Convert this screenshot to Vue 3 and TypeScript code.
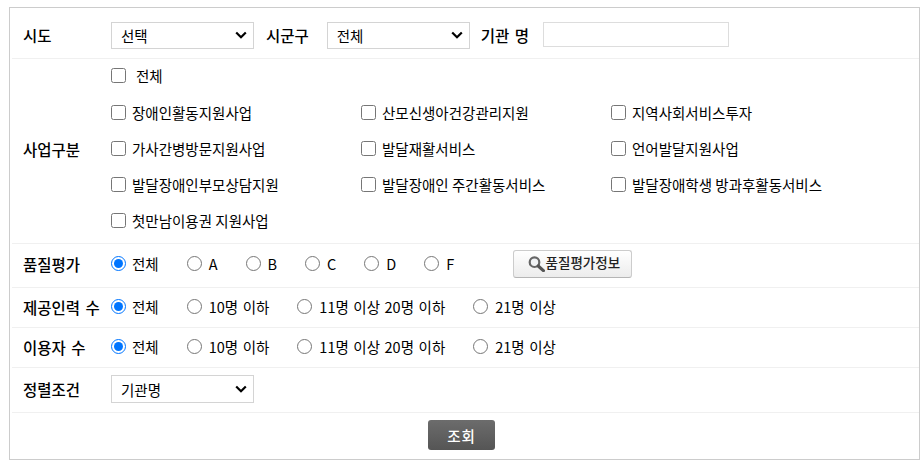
<script setup lang="ts">
const bizRows: string[][] = [
  ['장애인활동지원사업', '산모신생아건강관리지원', '지역사회서비스투자'],
  ['가사간병방문지원사업', '발달재활서비스', '언어발달지원사업'],
  ['발달장애인부모상담지원', '발달장애인 주간활동서비스', '발달장애학생 방과후활동서비스'],
  ['첫만남이용권 지원사업'],
]
const grades = ['전체', 'A', 'B', 'C', 'D', 'F']
const counts = ['전체', '10명 이하', '11명 이상 20명 이하', '21명 이상']
</script>

<template>
  <form class="panel" @submit.prevent>
    <div class="row row-top">
      <span class="label">시도</span>
      <select class="sel"><option>선택</option></select>
      <span class="label inline l-sgg">시군구</span>
      <select class="sel"><option>전체</option></select>
      <span class="label inline l-org">기관 명</span>
      <input class="txt" type="text" />
    </div>

    <div class="row row-biz">
      <span class="label">사업구분</span>
      <div class="biz">
        <label class="chk first"><input type="checkbox" /><span>전체</span></label>
        <div v-for="(r, i) in bizRows" :key="i" class="biz-row">
          <label v-for="t in r" :key="t" class="chk"><input type="checkbox" /><span>{{ t }}</span></label>
        </div>
      </div>
    </div>

    <div class="row row-grade">
      <span class="label">품질평가</span>
      <label v-for="(g, i) in grades" :key="g" class="rad">
        <input type="radio" name="grade" :checked="i === 0" /><span>{{ g }}</span>
      </label>
      <button type="button" class="info">
        <svg class="info-icon" width="18" height="16" viewBox="0 0 18 16">
          <circle cx="6.5" cy="6.2" r="4.8" fill="#f1f3f5" stroke="#666" stroke-width="2.2" />
          <path d="M10.2 10 L15.4 14.6" stroke="#555" stroke-width="3.2" stroke-linecap="round" />
        </svg>
        <span class="info-text">품질평가정보</span>
      </button>
    </div>

    <div class="row row-count">
      <span class="label">제공인력 수</span>
      <label v-for="(c, i) in counts" :key="c" class="rad">
        <input type="radio" name="staff" :checked="i === 0" /><span>{{ c }}</span>
      </label>
    </div>

    <div class="row row-count">
      <span class="label">이용자 수</span>
      <label v-for="(c, i) in counts" :key="c" class="rad">
        <input type="radio" name="user" :checked="i === 0" /><span>{{ c }}</span>
      </label>
    </div>

    <div class="row row-sort">
      <span class="label">정렬조건</span>
      <select class="sel sel-tall"><option>기관명</option></select>
    </div>

    <div class="actions">
      <button type="submit" class="search">조회</button>
    </div>
  </form>
</template>

<style>
html, body { margin: 0; background: #fff; }
</style>

<style scoped>
.panel {
  box-sizing: border-box;
  width: 911px;
  height: 453px;
  margin: 7px 0 0 9px;
  padding-left: 2px;
  border: 1px solid #ccc;
  font-family: "Noto Sans CJK KR", "Noto Sans", sans-serif;
  font-size: 14.5px;
  color: #000;
}
.row {
  box-sizing: border-box;
  display: flex;
  align-items: center;
  padding-left: 11px;
  border-bottom: 1px solid #f0f0f0;
}
.row-top { height: 51px; padding-top: 4px; }
.row-biz { height: 185px; padding-bottom: 4px; }
.row-grade { height: 44px; padding-bottom: 4px; }
.row-count { height: 40px; padding-bottom: 2px; }
.row-sort { height: 45px; padding-bottom: 2px; }
.label {
  width: 88px;
  flex: none;
  font-size: 15.5px;
  font-weight: 500;
  word-spacing: 2px;
  color: #000;
}
.label.inline { width: auto; }
.l-sgg { margin: 0 18px 0 12px; }
.l-org { margin: 0 14px 0 11px; }
.sel {
  box-sizing: border-box;
  width: 143px;
  height: 27px;
  padding: 0 20px 0 9px;
  border: 1px solid #d4d4d4;
  border-radius: 0;
  appearance: none;
  background-color: #fff;
  background-image: url("data:image/svg+xml,%3Csvg xmlns='http://www.w3.org/2000/svg' width='12' height='8' viewBox='0 0 12 8'%3E%3Cpath d='M1.2 1.5 6 6.2 10.8 1.5' fill='none' stroke='%23000' stroke-width='2.2'/%3E%3C/svg%3E");
  background-repeat: no-repeat;
  background-position: right 6px center;
  font: inherit;
  color: #000;
  outline: none;
}
.sel-tall { height: 28px; }
.txt {
  box-sizing: border-box;
  width: 186px;
  height: 25px;
  margin-top: -2px;
  border: 1px solid #ddd;
  background: #fff;
  outline: none;
}
.biz { display: flex; flex-direction: column; margin-top: -2px; }
.biz-row { display: flex; height: 36px; align-items: center; }
.chk {
  display: flex;
  align-items: center;
  width: 250px;
  flex: none;
}
.chk input {
  width: 15px;
  height: 15px;
  margin: 0 6px 0 0;
  flex: none;
}
.chk.first { height: 35px; margin-bottom: 2px; }
.chk.first input { margin-right: 10px; }
.rad {
  display: flex;
  align-items: center;
  margin-right: 28px;
  word-spacing: 1.3px;
}
.rad:nth-child(2) { margin-right: 28px; }
.rad input {
  width: 15px;
  height: 15px;
  margin: 0 7px 0 0;
  flex: none;
}
.rad:nth-child(2) input { margin-right: 6px; }
.info {
  box-sizing: border-box;
  display: flex;
  align-items: center;
  justify-content: center;
  width: 119px;
  height: 28px;
  margin-left: 31px;
  padding: 0 0 0 2px;
  border: 1px solid #ccc;
  border-bottom-color: #b5b5b5;
  border-radius: 3px;
  background: linear-gradient(#fff, #ececec);
  font: inherit;
  font-size: 13.5px;
  font-weight: 500;
  color: #222;
}
.info-icon { margin-top: 1px; }
.info-text { position: relative; top: -2px; }
.actions {
  display: flex;
  justify-content: center;
  padding-top: 7px;
  margin-left: -8px;
}
.search {
  box-sizing: border-box;
  width: 67px;
  height: 30px;
  padding: 0;
  border: 0;
  border-radius: 3px;
  background: linear-gradient(#6c6c6c, #555);
  font: inherit;
  font-weight: 500;
  letter-spacing: 1px;
  color: #fff;
}
</style>
